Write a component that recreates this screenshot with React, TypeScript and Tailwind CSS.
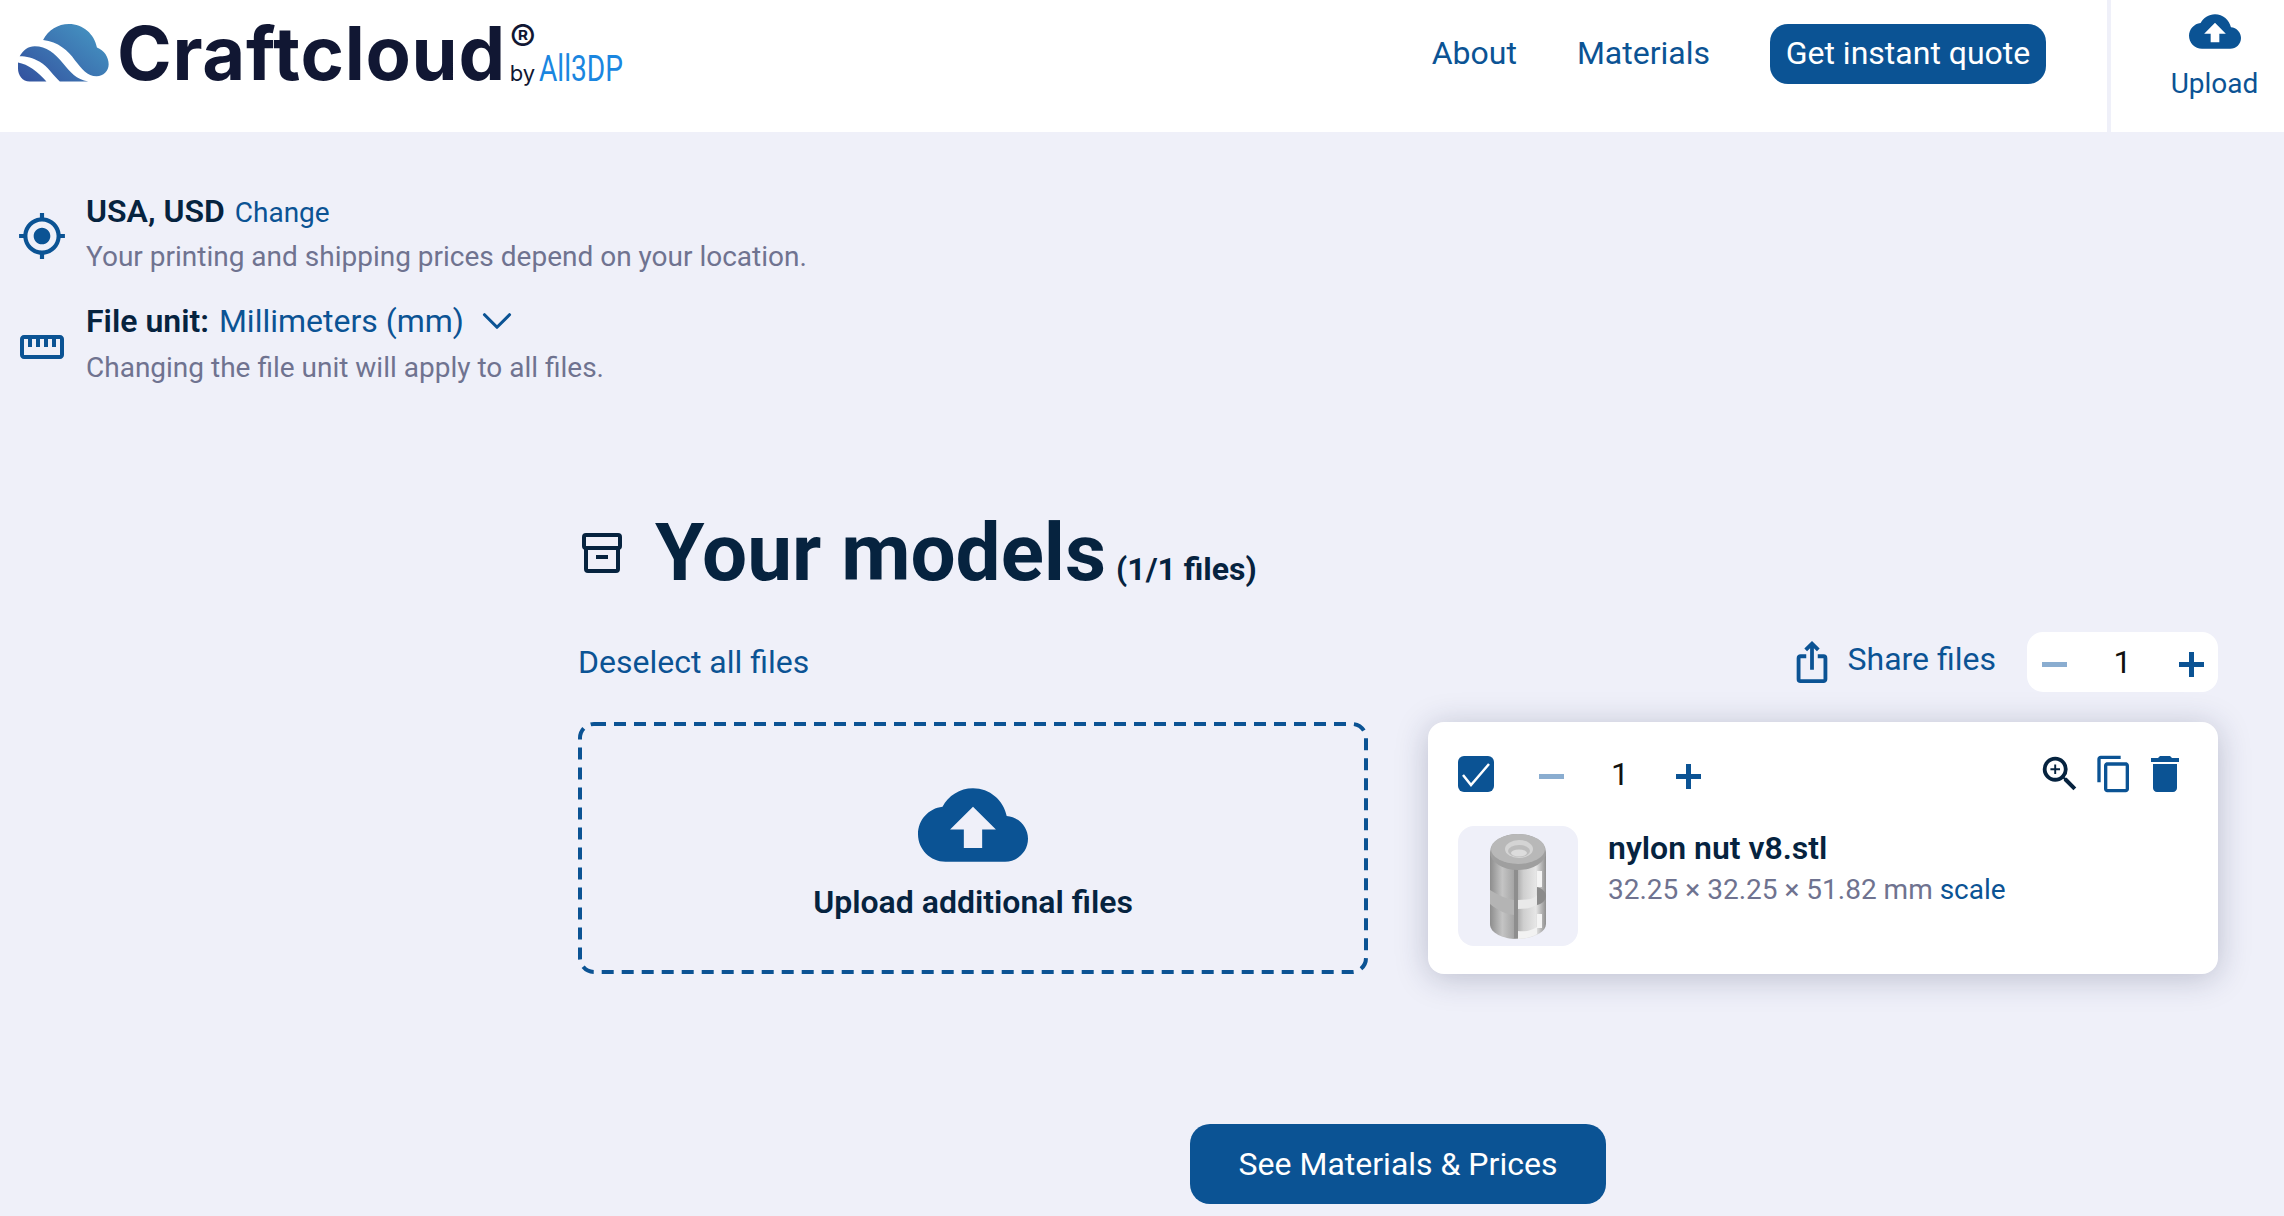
import React from 'react';
import { ChevronDown } from 'lucide-react';
import {
  MdContentCopy,
  MdDelete,
  MdGpsFixed,
  MdIosShare,
  MdStraighten,
  MdZoomIn,
} from 'react-icons/md';

function CloudUpload({ className }: { className: string }) {
  return (
    <svg viewBox="0 4 24 16" className={className} fill="currentColor" aria-hidden>
      <path
        fillRule="evenodd"
        d="M19.35 10.04C18.67 6.59 15.64 4 12 4 9.11 4 6.6 5.64 5.35 8.04 2.34 8.36 0 10.91 0 14c0 3.31 2.69 6 6 6h13c2.76 0 5-2.24 5-5 0-2.64-2.05-4.78-4.65-4.96zM14 13v4h-4v-4H7l5-5 5 5h-3z"
      />
    </svg>
  );
}

function LogoMark() {
  return (
    <svg viewBox="55 72 272 173" className="h-[58px] w-[91px] shrink-0" aria-hidden>
      <defs>
        <linearGradient id="logoFill" x1="0" y1="1" x2="1" y2="0.2">
          <stop offset="0" stopColor="#33509e" />
          <stop offset="1" stopColor="#4594c2" />
        </linearGradient>
      </defs>
      <path
        fill="url(#logoFill)"
        d="M130 120C145 90 175 72 207 72c43 0 76 30 84 70 21 8 35 28 35 50 0 20-16 36-36 36-28 0-45-23-65-48-20-28-50-55-95-60zM60 168c10-18 25-30 45-30 35 0 60 20 85 52 20 25 40 48 75 54h-85c-20-18-35-44-60-59-20-13-40-17-60-17zM55 187c30 5 60 28 85 57H90c-22 0-35-19-35-39z"
      />
    </svg>
  );
}

function NutThumbnail() {
  return (
    <svg viewBox="0 0 120 120" className="h-[120px] w-[120px]" aria-hidden>
      <defs>
        <linearGradient id="nutBody" x1="0" y1="0" x2="1" y2="0">
          <stop offset="0" stopColor="#8d8d8d" />
          <stop offset="0.22" stopColor="#c4c4c4" />
          <stop offset="0.45" stopColor="#a2a2a2" />
          <stop offset="0.6" stopColor="#cfcfcf" />
          <stop offset="0.82" stopColor="#e6e6e6" />
          <stop offset="1" stopColor="#8f8f8f" />
        </linearGradient>
      </defs>
      <path d="M32 26v72c0 9 13 15 27 15s29-6 29-15V26z" fill="url(#nutBody)" />
      <path d="M32 64c8 5 16 9 24 10v15c-8-1-17-5-24-11z" fill="#b4b4b4" />
      <path d="M56 42v70h4V42z" fill="#8e8e8e" />
      <path d="M60 74c9 0 16-1 19-5v9c-4 4-11 5-19 5z" fill="#e9e9e9" />
      <path d="M60 105c6 1 13 0 19-4v7c-5 3-12 5-19 5z" fill="#f2f2f2" />
      <path d="M79 45h5v16h-5zM79 88h5v14h-5z" fill="#f4f4f4" />
      <path d="M79 61c5 1 9 5 9 9s-4 8-9 9z" fill="#8b8b8b" />
      <ellipse cx="60" cy="26" rx="28" ry="18" fill="#9f9f9f" />
      <ellipse cx="60" cy="23" rx="27" ry="15" fill="#b8b8b8" />
      <ellipse cx="61" cy="23" rx="14" ry="9" fill="#d4d4d4" />
      <ellipse cx="61" cy="25" rx="11" ry="6" fill="#bcbcbc" />
      <ellipse cx="61" cy="27" rx="8" ry="3.5" fill="#dcdcdc" />
    </svg>
  );
}

function Stepper({ value }: { value: number }) {
  return (
    <div className="flex items-center gap-[44px]">
      <span className="mt-[4px] h-[5px] w-[25px] bg-[#8aadd0]" />
      <span className="w-[24px] text-center text-[32px] leading-none text-[#111]">{value}</span>
      <span className="relative mt-[4px] h-[25px] w-[25px]">
        <span className="absolute inset-x-0 top-[10px] h-[5px] bg-[#0b5394]" />
        <span className="absolute inset-y-0 left-[10px] w-[5px] bg-[#0b5394]" />
      </span>
    </div>
  );
}

export default function App() {
  return (
    <div className="h-[1216px] overflow-hidden bg-[#eff0f9] font-['Roboto',sans-serif] text-[#06233f]">
      {/* Header */}
      <header className="flex h-[132px] items-stretch bg-white">
        <div className="flex items-start pl-[18px] pt-[24px]">
          <LogoMark />
          <span className="ml-[8px] font-['Inter',sans-serif] text-[74px] font-bold leading-[58px] tracking-[0.01em] text-[#111733]">
            Craftcloud
          </span>
          <div className="ml-[4px] flex flex-col">
            <span className="font-['Inter',sans-serif] text-[39px] font-normal leading-[30px] text-[#111733]">®</span>
            <div className="flex items-baseline">
              <span className="font-['Inter',sans-serif] text-[22px] leading-[30px] text-[#111733]">by</span>
              <span className="ml-[4px] inline-block origin-left scale-x-[0.78] text-[36px] font-normal leading-[30px] text-[#1a86e0]">
                All3DP
              </span>
            </div>
          </div>
        </div>

        <nav className="ml-auto flex items-start gap-[60px] pr-[61px] pt-[24px] text-[32px] leading-[58px] text-[#0b5394]">
          <a>About</a>
          <a>Materials</a>
          <a className="flex h-[60px] w-[276px] items-center justify-center rounded-[18px] bg-[#0b5394] pb-[2px] text-white">
            Get instant quote
          </a>
        </nav>

        <div className="flex w-[177px] flex-col items-center border-l-4 border-[#eff0f9] pl-[34px] pt-[14px] text-[#0b5394]">
          <CloudUpload className="h-[35px] w-[52px]" />
          <span className="mt-[15px] text-[28px] leading-[40px]">Upload</span>
        </div>
      </header>

      {/* Location + file unit */}
      <section className="pl-[17px] pt-[59px]">
        <div className="flex items-center gap-[19px]">
          <div className="flex w-[50px] justify-center pt-[3px] text-[#0b5394]">
            <MdGpsFixed size={50} />
          </div>
          <div>
            <p className="flex items-baseline gap-[10px] leading-[40px]">
              <span className="text-[32px] font-semibold">USA, USD</span>
              <a className="text-[28px] text-[#0b5394]">Change</a>
            </p>
            <p className="mt-[4px] text-[28px] leading-[40px] text-[#6f7390]">
              Your printing and shipping prices depend on your location.
            </p>
          </div>
        </div>

        <div className="mt-[24px] flex items-center gap-[19px]">
          <div className="flex w-[50px] justify-center pt-[5px] text-[#0b5394]">
            <MdStraighten size={48} />
          </div>
          <div>
            <p className="flex items-center text-[32px] leading-[40px]">
              <span className="font-semibold">File unit:</span>
              <a className="ml-[10px] text-[#0b5394]">Millimeters (mm)</a>
              <ChevronDown size={50} strokeWidth={1.5} className="ml-[8px] -my-[5px] text-[#0b5394]" />
            </p>
            <p className="mt-[7px] text-[28px] leading-[40px] text-[#6f7390]">
              Changing the file unit will apply to all files.
            </p>
          </div>
        </div>
      </section>

      {/* Models */}
      <main className="ml-[578px] mt-[120px] w-[1640px]">
        <div className="flex items-baseline pl-[4px]">
          <svg
            viewBox="0 0 40 40"
            className="h-[40px] w-[40px] shrink-0 self-center text-[#06233f]"
            fill="none"
            stroke="currentColor"
            strokeWidth="4"
            aria-hidden
          >
            <rect x="2" y="2" width="36" height="13" rx="2" />
            <path d="M4 15v21a2 2 0 0 0 2 2h28a2 2 0 0 0 2-2V15M14 24h12" />
          </svg>
          <h1 className="ml-[33px] text-[80px] font-bold leading-[90px]">Your models</h1>
          <span className="ml-[10px] text-[32px] font-bold">(1/1 files)</span>
        </div>

        <div className="mt-[34px] flex items-center">
          <a className="text-[32px] leading-[60px] text-[#0b5394]">Deselect all files</a>
          <a className="ml-auto flex items-center gap-[13px] text-[32px] text-[#0b5394]">
            <MdIosShare size={46} />
            <span className="pb-[6px]">Share files</span>
          </a>
          <div className="ml-[31px] flex h-[60px] w-[191px] items-center justify-center rounded-[16px] bg-white">
            <Stepper value={1} />
          </div>
        </div>

        <div className="mt-[30px] grid grid-cols-[790px_790px] gap-[60px]">
          <div className="relative flex h-[252px] flex-col items-center pt-[66px]">
            {/* dash pattern is longer than a CSS dashed border gives */}
            <svg className="absolute inset-0 h-full w-full" fill="none" stroke="#0b5394" strokeWidth="4" aria-hidden>
              <rect x="2" y="2" width="786" height="248" rx="14" strokeDasharray="12 8" />
            </svg>
            <CloudUpload className="h-[74px] w-[110px] text-[#0b5394]" />
            <span className="mt-[18px] text-[32px] font-semibold leading-[44px]">Upload additional files</span>
          </div>

          <div className="h-[252px] rounded-[16px] bg-white px-[30px] pt-[34px] shadow-[0_4px_32px_rgba(30,40,80,0.25)]">
            <div className="flex h-[36px] items-center">
              <span className="flex h-[36px] w-[36px] items-center justify-center rounded-[6px] bg-[#0b5394]">
                <svg viewBox="0 0 36 36" className="h-[36px] w-[36px]" fill="none" stroke="#fff" strokeWidth="2.5" aria-hidden>
                  <path d="M5 19l8 10L31 8" />
                </svg>
              </span>
              <div className="ml-[45px]">
                <Stepper value={1} />
              </div>
              <div className="ml-auto flex items-center text-[#0b5394]">
                <MdZoomIn size={46} className="text-[#06233f]" />
                <MdContentCopy size={40} className="ml-[11px]" />
                <MdDelete size={48} className="ml-[7px] mr-[-1px]" />
              </div>
            </div>

            <div className="mt-[34px] flex">
              <div className="h-[120px] w-[120px] rounded-[16px] bg-[#eff0f9]">
                <NutThumbnail />
              </div>
              <div className="ml-[30px]">
                <p className="text-[32px] font-semibold leading-[44px]">nylon nut v8.stl</p>
                <p className="mt-[2px] text-[28px] leading-[36px] text-[#6f7390]">
                  32.25 × 32.25 × 51.82 mm <a className="text-[#0b5394]">scale</a>
                </p>
              </div>
            </div>
          </div>
        </div>

        <a className="mx-auto mt-[150px] flex h-[80px] w-[416px] items-center justify-center rounded-[20px] bg-[#0b5394] text-[32px] text-white">
          See Materials &amp; Prices
        </a>
      </main>
    </div>
  );
}
